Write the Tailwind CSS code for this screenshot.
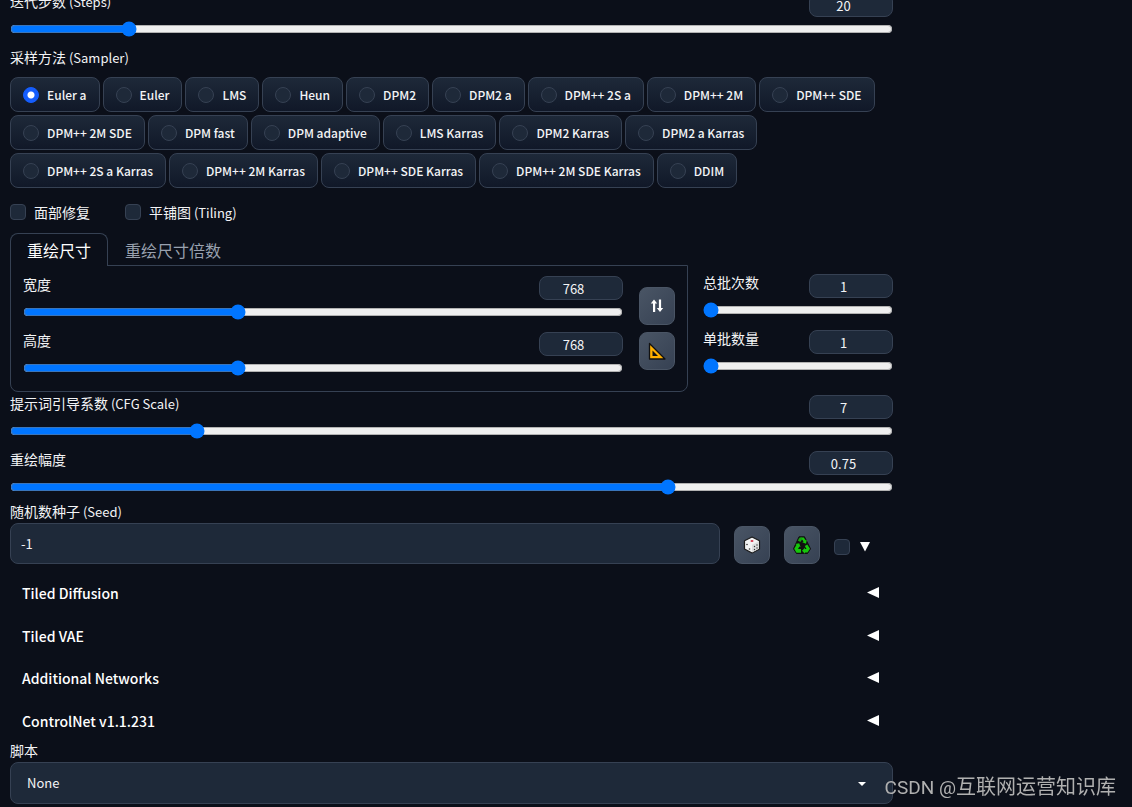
<!DOCTYPE html>
<html lang="zh-CN">
<head>
<meta charset="utf-8">
<meta name="viewport" content="width=device-width, initial-scale=1">
<title>Stable Diffusion</title>
<script src="https://cdn.jsdelivr.net/npm/@tailwindcss/browser@4"></script>
</head>
<body class="overflow-x-hidden bg-[#0b0f19] font-['Noto_Sans_CJK_SC',sans-serif] text-[13px] text-gray-100">
<main class="-mt-[7px] ml-[10px] w-full max-w-[883px]">

  <div class="flex flex-col gap-1">
    <div class="flex h-6 items-start justify-between">
      <label for="steps" class="leading-4"><span class="text-sm leading-4">迭代步数</span> (Steps)</label>
      <input type="number" aria-label="Steps" value="20" class="h-6 w-[84px] rounded-lg border border-gray-700 bg-gray-800 px-2 text-center">
    </div>
    <input id="steps" type="range" min="1" max="150" value="20" class="h-4 w-full">
  </div>

  <fieldset class="mt-[10px]">
    <legend class="leading-5"><span class="text-sm leading-5">采样方法</span> (Sampler)</legend>
    <div id="samplers" class="mt-[9px] flex flex-wrap gap-[3px]"></div>
  </fieldset>

  <div class="mt-[14px] flex h-5 items-center gap-[35px]">
    <label class="flex items-center gap-2"><input type="checkbox" class="size-4 appearance-none rounded-sm border border-gray-700 bg-gray-800 checked:bg-blue-600"><span class="text-sm leading-5">面部修复</span></label>
    <label class="flex items-center gap-2"><input type="checkbox" class="size-4 appearance-none rounded-sm border border-gray-700 bg-gray-800 checked:bg-blue-600"><span class="leading-5"><span class="text-sm leading-5">平铺图</span> (Tiling)</span></label>
  </div>

  <div class="mt-[11px] flex gap-[15px]">
    <section class="min-w-0 flex-1">
      <div role="tablist" class="relative z-10 -mb-px flex h-[33px] text-base leading-8">
        <button role="tab" aria-selected="true" class="rounded-t-lg border border-b-0 border-gray-700 bg-[#0b0f19] px-4 text-white">重绘尺寸</button>
        <button role="tab" aria-selected="false" class="px-[17px] text-gray-400">重绘尺寸倍数</button>
      </div>
      <div class="flex gap-4 rounded-b-lg border border-gray-700 px-3 pt-[10px] pb-[15px]">
        <div class="flex flex-1 flex-col gap-3">
          <div class="flex flex-col gap-1">
            <div class="flex h-6 items-start justify-between">
              <label for="width" class="text-sm leading-4">宽度</label>
              <input type="number" aria-label="宽度" value="768" class="h-6 w-[84px] rounded-lg border border-gray-700 bg-gray-800 px-2 text-center">
            </div>
            <input id="width" type="range" min="64" max="2048" value="768" class="h-4 w-full">
          </div>
          <div class="flex flex-col gap-1">
            <div class="flex h-6 items-start justify-between">
              <label for="height" class="text-sm leading-4">高度</label>
              <input type="number" aria-label="高度" value="768" class="h-6 w-[84px] rounded-lg border border-gray-700 bg-gray-800 px-2 text-center">
            </div>
            <input id="height" type="range" min="64" max="2048" value="768" class="h-4 w-full">
          </div>
        </div>
        <div class="flex flex-col gap-[7px] pt-[11px]">
          <button aria-label="交换宽高" class="flex h-[38px] w-9 items-center justify-center rounded-lg border border-gray-600 bg-linear-to-br from-gray-600 to-gray-700">
            <svg class="h-[14px] w-[14px]" viewBox="0 0 14 14" fill="#fff"><path d="M4 .5 7.200 4.500H5.200V13H3V4.500H.8zM10 13 6.800 9H8.900V.5H11.100V9h2.100z"/></svg>
          </button>
          <button aria-label="检测尺寸" class="flex h-[38px] w-9 items-center justify-center rounded-lg border border-gray-600 bg-linear-to-br from-gray-600 to-gray-700">
            <svg class="h-[18px] w-[18px]" viewBox="0 0 18 18"><path d="M1.500 1.500v15.500h15.500z" fill="#ffb000" stroke="#111" stroke-width="1.300" stroke-linejoin="round"/><path d="M4.500 8.500v5.500h5.500z" fill="#111"/></svg>
          </button>
        </div>
      </div>
    </section>

    <section class="flex w-[190px] flex-col gap-3 pt-[41px]">
      <div class="flex flex-col gap-1">
        <div class="flex h-6 items-start justify-between">
          <label for="count" class="text-sm leading-4">总批次数</label>
          <input type="number" aria-label="总批次数" value="1" class="h-6 w-[84px] rounded-lg border border-gray-700 bg-gray-800 px-2 text-center">
        </div>
        <input id="count" type="range" min="1" max="100" value="1" class="h-4 w-full">
      </div>
      <div class="flex flex-col gap-1">
        <div class="flex h-6 items-start justify-between">
          <label for="size" class="text-sm leading-4">单批数量</label>
          <input type="number" aria-label="单批数量" value="1" class="h-6 w-[84px] rounded-lg border border-gray-700 bg-gray-800 px-2 text-center">
        </div>
        <input id="size" type="range" min="1" max="8" value="1" class="h-4 w-full">
      </div>
    </section>
  </div>

  <div class="mt-[3px] flex flex-col gap-3">
    <div class="flex flex-col gap-1">
      <div class="flex h-6 items-start justify-between">
        <label for="cfg" class="leading-4"><span class="text-sm leading-4">提示词引导系数</span> (CFG Scale)</label>
        <input type="number" aria-label="CFG Scale" value="7" class="h-6 w-[84px] rounded-lg border border-gray-700 bg-gray-800 px-2 text-center">
      </div>
      <input id="cfg" type="range" min="1" max="30" step="0.5" value="7" class="h-4 w-full">
    </div>
    <div class="flex flex-col gap-1">
      <div class="flex h-6 items-start justify-between">
        <label for="denoise" class="text-sm leading-4">重绘幅度</label>
        <input type="number" aria-label="重绘幅度" value="0.75" step="0.01" class="h-6 w-[84px] rounded-lg border border-gray-700 bg-gray-800 px-2 text-center">
      </div>
      <input id="denoise" type="range" min="0" max="1" step="0.01" value="0.75" class="h-4 w-full">
    </div>
  </div>

  <div class="mt-[6px] flex items-end gap-[14px]">
    <div class="flex flex-1 flex-col gap-px">
      <label for="seed" class="leading-5"><span class="text-sm leading-5">随机数种子</span> (Seed)</label>
      <input id="seed" type="text" value="-1" class="h-[41px] w-full rounded-lg border border-gray-700 bg-gray-800 px-[10px]">
    </div>
    <button aria-label="随机种子" class="flex h-[38px] w-9 items-center justify-center rounded-lg border border-gray-600 bg-linear-to-br from-gray-600 to-gray-700">
      <svg class="h-[18px] w-[18px]" viewBox="0 0 18 18"><path d="M9 1 16.500 4.800v8.200L9 17 1.500 13V4.800z" fill="#f3f3f3" stroke="#1b1b1b" stroke-width="1.200" stroke-linejoin="round"/><path d="M9 8.800 16 5.200v7.500L9 16.400z" fill="#dcdcdc"/><ellipse cx="9" cy="5" rx="1.500" ry="1" fill="#d5344a"/><g fill="#333"><circle cx="4" cy="8.500" r=".8"/><circle cx="6.500" cy="13" r=".8"/><circle cx="11.500" cy="10.500" r=".7"/><circle cx="14" cy="9" r=".7"/><circle cx="11.500" cy="13.500" r=".7"/><circle cx="14" cy="12" r=".7"/></g></svg>
    </button>
    <button aria-label="重用种子" class="flex h-[38px] w-9 items-center justify-center rounded-lg border border-gray-600 bg-linear-to-br from-gray-600 to-gray-700">
      <svg class="h-[18px] w-[18px]" viewBox="0 0 18 18"><path d="M6 .8h5.500l6 12-3 4.700H3.500L.5 12.800z" fill="#111" stroke="#111" stroke-linejoin="round"/><g fill="#16c60c"><path d="M7.500 1.500h3.300l1.700 2.800 1.200-.4-.7 3.900-3.700-1.500 1.300-.8L8.700 3z"/><path d="M14.300 8.500 17 12.700 14.500 16.500H12v1.200L9 14.700l3-3V13h1.500l-1.700-2.900z"/><path d="M2.300 8 6.200 7.300 7.600 11l-1.200-.6L5 13h3v3.700H3.500L1.200 12.800l2.300-4z"/></g><path d="M6.500 1.800 4.800 4.500l2.600 1.600 2-3.200-1-1.400H7z" fill="#16a510"/></svg>
    </button>
    <div class="flex h-[34px] w-[59px] items-center gap-[10px]">
      <input type="checkbox" aria-label="更多种子选项" class="size-4 appearance-none rounded-sm border border-gray-700 bg-gray-800 checked:bg-blue-600">
      <svg class="h-[10px] w-[10px]" viewBox="0 0 10 10"><path d="M0 0h10L5 9.500z" fill="#fff"/></svg>
    </div>
  </div>

  <div class="mt-2 grid h-[170px] grid-rows-4 text-sm font-medium text-white">
    <button class="flex items-center justify-between pr-[14px] pl-3">Tiled Diffusion<svg class="h-3 w-3" viewBox="0 0 12 12"><path d="M12 0v11L0 5.500z" fill="#fff"/></svg></button>
    <button class="flex items-center justify-between pr-[14px] pl-3">Tiled VAE<svg class="h-3 w-3" viewBox="0 0 12 12"><path d="M12 0v11L0 5.500z" fill="#fff"/></svg></button>
    <button class="flex items-center justify-between pr-[14px] pl-3">Additional Networks<svg class="h-3 w-3" viewBox="0 0 12 12"><path d="M12 0v11L0 5.500z" fill="#fff"/></svg></button>
    <button class="flex items-center justify-between pr-[14px] pl-3">ControlNet v1.1.231<svg class="h-3 w-3" viewBox="0 0 12 12"><path d="M12 0v11L0 5.500z" fill="#fff"/></svg></button>
  </div>

  <label for="script" class="block text-sm leading-4">脚本</label>
  <div class="relative mt-1 mb-[3px]">
    <select id="script" class="h-[42px] w-full appearance-none rounded-lg border border-gray-700 bg-gray-800 px-4"><option>None</option></select>
    <svg class="pointer-events-none absolute top-5 right-[27px] h-1 w-2" viewBox="0 0 8 4"><path d="M0 0h8L4 4z" fill="#fff"/></svg>
  </div>
</main>

<p class="pointer-events-none fixed right-4 bottom-[3px] font-['Roboto','Noto_Sans_CJK_SC',sans-serif] text-xl leading-8 text-[#b0b0b0]"><span class="text-[19px]">CSDN @</span>互联网运营知识库</p>

<template id="sampler">
  <label class="flex h-[35px] items-center gap-2 rounded-lg border border-gray-700 bg-linear-to-b from-gray-800 to-gray-900 px-3 text-xs font-medium">
    <input type="radio" name="sampler" class="size-4 appearance-none rounded-full border border-gray-700 bg-gray-800 checked:border-blue-600 checked:bg-blue-600 checked:bg-[radial-gradient(circle,#fff_3px,transparent_4px)]">
    <span></span>
  </label>
</template>
<script>
  const names = ['Euler a', 'Euler', 'LMS', 'Heun', 'DPM2', 'DPM2 a', 'DPM++ 2S a', 'DPM++ 2M', 'DPM++ SDE',
    'DPM++ 2M SDE', 'DPM fast', 'DPM adaptive', 'LMS Karras', 'DPM2 Karras', 'DPM2 a Karras',
    'DPM++ 2S a Karras', 'DPM++ 2M Karras', 'DPM++ SDE Karras', 'DPM++ 2M SDE Karras', 'DDIM'];
  const list = document.getElementById('samplers');
  names.forEach((name, i) => {
    const item = document.getElementById('sampler').content.cloneNode(true);
    item.querySelector('span').textContent = name;
    item.querySelector('input').value = name;
    item.querySelector('input').checked = i === 0;
    list.append(item);
  });
</script>
</body>
</html>
